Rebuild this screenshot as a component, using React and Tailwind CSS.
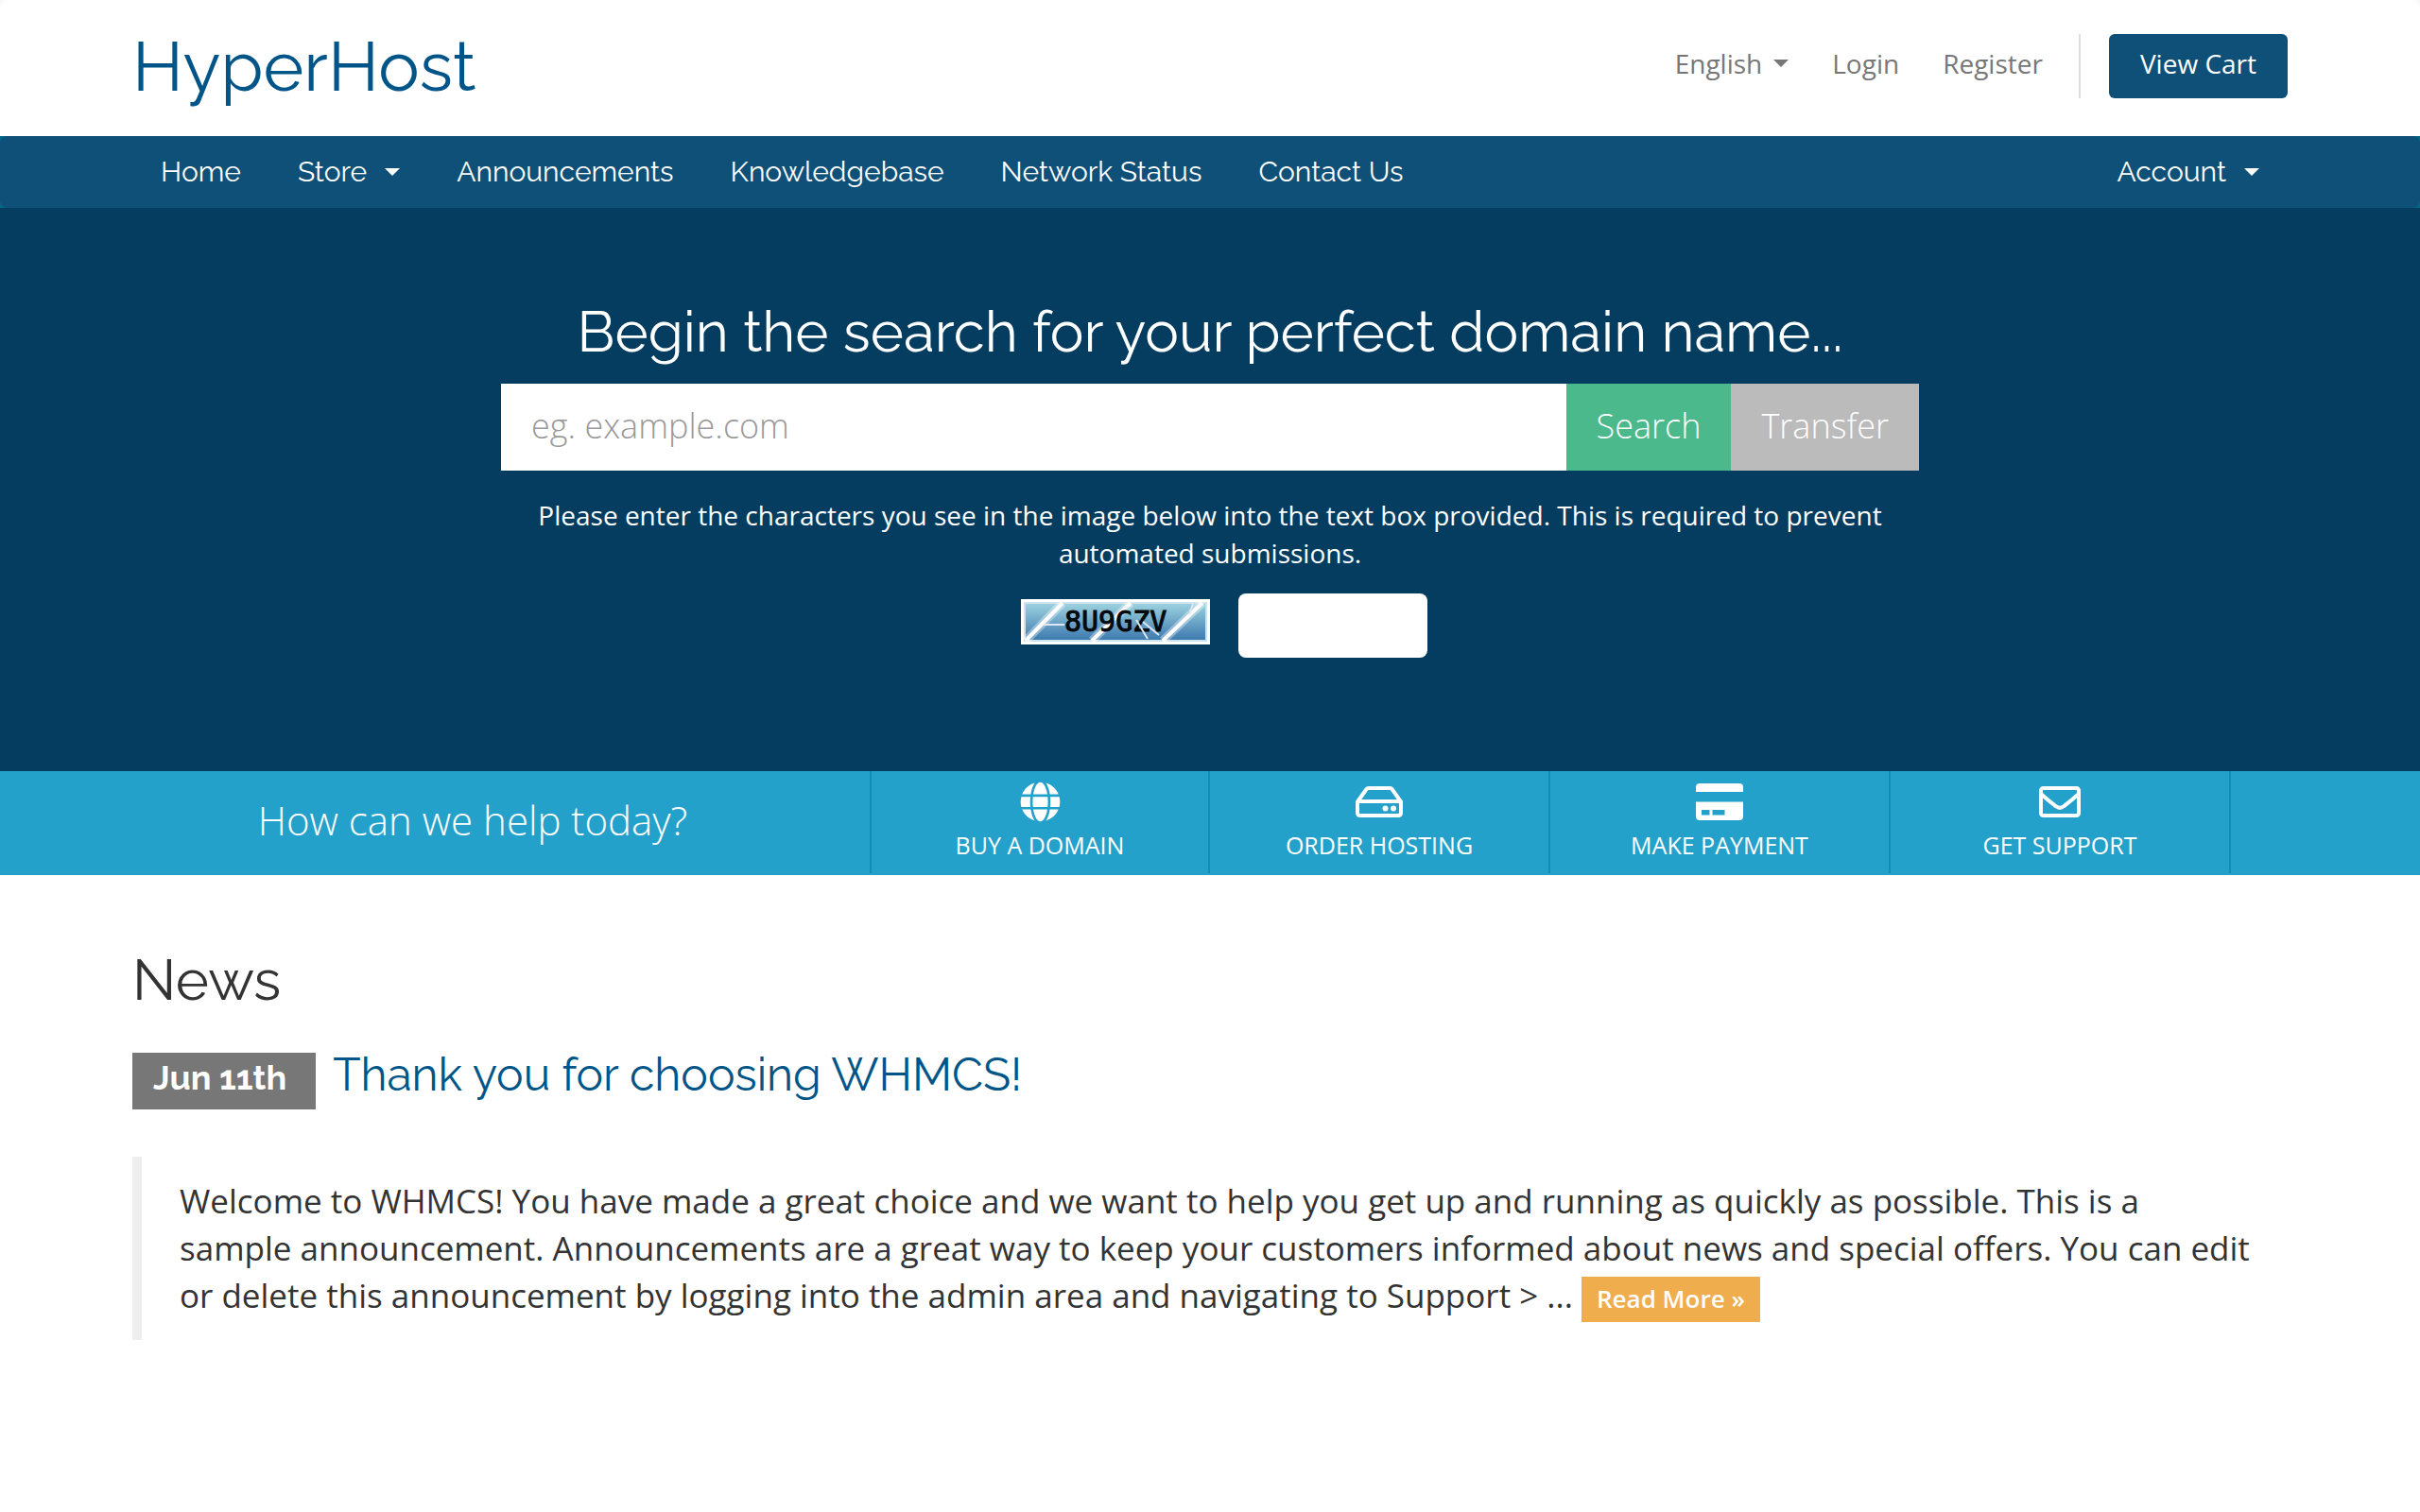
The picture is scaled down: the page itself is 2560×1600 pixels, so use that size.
import { useState } from "react";
import { FaGlobe } from "react-icons/fa";

const menu = [
  { label: "Home" },
  { label: "Store", dropdown: true },
  { label: "Announcements" },
  { label: "Knowledgebase" },
  { label: "Network Status" },
  { label: "Contact Us" },
];

const Caret = ({ className = "" }) => (
  <span className={"inline-block border-x-8 border-t-8 border-x-transparent border-t-current " + className} />
);

const HddIcon = () => (
  <svg viewBox="0 0 50 33" className="h-[33px] w-[50px]" fill="none" stroke="currentColor" strokeWidth="4">
    <path d="M2 28V16.500L11.500 3Q12.300 2 13.500 2H36.500Q37.700 2 38.500 3L48 16.500V28Q48 31 45 31H5Q2 31 2 28Z" />
    <path d="M3 16H47" />
    <circle cx="31.500" cy="23.500" r="3" fill="currentColor" stroke="none" />
    <circle cx="40" cy="23.500" r="3" fill="currentColor" stroke="none" />
  </svg>
);

const EnvelopeIcon = () => (
  <svg viewBox="0 0 44 33" className="h-[33px] w-[44px]" fill="none" stroke="currentColor" strokeWidth="4">
    <rect x="2" y="2" width="40" height="29" rx="2.500" />
    <path d="M2.500 8.500C8 13.500 13 17.500 18 21.300Q22 24.500 26 21.300C31 17.500 36 13.500 41.500 8.500" />
  </svg>
);

const CardIcon = () => (
  <svg viewBox="0 0 50 39" className="h-[39px] w-[50px]" fill="currentColor">
    <path d="M0 9V4Q0 0 4 0H46Q50 0 50 4V9Z" />
    <path fillRule="evenodd" d="M0 19.500H50V35Q50 39 46 39H4Q0 39 0 35ZM6 28V33.500H14.500V28ZM17.500 28V33.500H30.500V28Z" />
  </svg>
);

const shortcuts = [
  { label: "Buy A Domain", icon: <FaGlobe className="size-[43px]" /> },
  { label: "Order Hosting", icon: <HddIcon /> },
  { label: "Make Payment", icon: <CardIcon /> },
  { label: "Get Support", icon: <EnvelopeIcon /> },
];

const CaptchaImage = () => (
  <svg viewBox="0 0 200 48" className="h-12 w-[200px]" role="img" aria-label="Security code">
    <defs>
      <linearGradient id="captcha-bg" x1="0" y1="0" x2="0" y2="1">
        <stop offset="0" stopColor="#9fd3e0" />
        <stop offset="1" stopColor="#3b78ae" />
      </linearGradient>
    </defs>
    <rect width="200" height="48" fill="#fff" />
    <rect x="4" y="4" width="192" height="40" fill="url(#captcha-bg)" stroke="#cfe3ee" strokeWidth="2" />
    <path d="M5 44L44 4M75 44L116 4M150 44L192 4" stroke="#fff" strokeWidth="9" strokeOpacity="0.35" />
    <path d="M5 44L44 4M75 44L116 4M150 44L192 4" stroke="#fff" strokeWidth="4" />
    <text x="46" y="34" fontSize="30" fontFamily="'DejaVu Sans Mono', monospace" fill="#05090c" stroke="#05090c" strokeWidth="1">8U9GZV</text>
    <path d="M24 27H46M122 22L134 42M129 24L146 38M178 16L182 5" stroke="#dde6f2" strokeWidth="2" />
  </svg>
);

export default function App() {
  const [domain, setDomain] = useState("");
  const [code, setCode] = useState("");

  return (
    <div className="min-h-screen bg-white font-['Open_Sans',sans-serif] text-[28px] leading-10 text-[#333]">
      <header className="bg-[#f8f8f8]">
        <div className="flex h-36 items-start justify-between rounded-t-lg bg-white px-[140px] pt-9">
          <a href="#" className="font-['Raleway','Lato',sans-serif] text-[73px] leading-[68px] text-[#058]">HyperHost</a>
          <div className="flex items-start text-[#777]">
            <button className="mr-[46px] flex items-center pt-[11px]">
              English <Caret className="ml-3" />
            </button>
            <a href="#" className="mr-[46px] pt-[11px]">Login</a>
            <a href="#" className="mr-[38px] pt-[11px]">Register</a>
            <a href="#" className="border-l-2 border-[#ddd] pl-[30px]">
              <span className="block h-[68px] rounded-md bg-[#0f5078] px-[33px] pt-[11px] text-white">View Cart</span>
            </a>
          </div>
        </div>
      </header>

      <div className="bg-[#006687]">
        <nav className="flex h-[76px] items-center justify-between rounded-lg bg-[#0f5078] px-[140px] font-['Raleway','Lato',sans-serif] text-[30px] text-white">
          <div className="flex">
            {menu.map((item) => (
              <a key={item.label} href="#" className="flex items-center px-[30px]">
                {item.label}
                {item.dropdown && <Caret className="ml-[19px]" />}
              </a>
            ))}
          </div>
          <a href="#" className="flex items-center px-[30px]">
            Account <Caret className="ml-[19px]" />
          </a>
        </nav>
      </div>

      <section className="h-[596px] bg-[#043d60] pt-[98px] text-center text-white">
        <div className="mx-auto max-w-[1500px]">
          <h2 className="font-['Raleway','Lato',sans-serif] text-[60px] leading-[66px]">Begin the search for your perfect domain name...</h2>
          <form onSubmit={(e) => e.preventDefault()}>
            <div className="mt-[22px] flex h-[92px] text-[36px] font-light">
              <input
                type="text"
                aria-label="Domain name"
                placeholder="eg. example.com"
                value={domain}
                onChange={(e) => setDomain(e.target.value)}
                className="min-w-0 flex-1 bg-white px-8 pb-0.5 text-[#555] placeholder:text-[#999]"
              />
              <button className="bg-[#4bb98c] px-8 pb-0.5">Search</button>
              <button className="bg-[#bbb] px-8 pb-0.5">Transfer</button>
            </div>
            <p className="mt-[27px] px-8">
              Please enter the characters you see in the image below into the text box provided. This is required to prevent automated submissions.
            </p>
            <div className="mt-[23px] flex items-start justify-center gap-[30px] pl-[30px]">
              <div className="pt-1.5">
                <CaptchaImage />
              </div>
              <input
                type="text"
                aria-label="Characters in the image"
                value={code}
                onChange={(e) => setCode(e.target.value)}
                className="h-[68px] w-[200px] rounded-lg bg-white px-6 text-[#555]"
              />
            </div>
          </form>
        </div>
      </section>

      <section className="grid h-[110px] grid-cols-[7fr_3fr_3fr_3fr_3fr] bg-[#24a1ca] pr-[200px] pb-0.5 pl-20 text-white">
        <h3 className="pt-[23px] text-center text-[42px] leading-[58px] font-light">How can we help today?</h3>
        {shortcuts.map((item) => (
          <a key={item.label} href="#" className="flex flex-col items-center border-r-2 border-[#128bb5] pt-2 text-[25px] leading-9 uppercase first-of-type:border-l-2">
            <span className="flex h-12 items-center">{item.icon}</span>
            <span className="mt-1">{item.label}</span>
          </a>
        ))}
      </section>

      <main className="px-[140px] pt-[78px]">
        <h2 className="font-['Raleway','Lato',sans-serif] text-[60px] leading-[66px]">News</h2>
        <article>
          <div className="mt-11 flex items-start gap-[18px] font-['Raleway','Lato',sans-serif]">
            <span className="h-[60px] bg-[#777] pt-1.5 pr-[31px] pl-[22px] text-[36px] leading-10 font-bold text-white">Jun 11th</span>
            <a href="#" className="text-[48px] leading-[46px] text-[#058]">Thank you for choosing WHMCS!</a>
          </div>
          <blockquote className="mt-[50px] border-l-[10px] border-[#eee] px-10 pt-[22px] pb-[19px] text-[35px] leading-[50px]">
            <p>
              Welcome to WHMCS! You have made a great choice and we want to help you get up and running as quickly as possible. This is a sample announcement. Announcements are a great way to keep your customers informed about news and special offers. You can edit or delete this announcement by logging into the admin area and navigating to Support &gt; ...{" "}
              <a href="#" className="inline-block h-12 bg-[#f0ad4e] px-4 align-middle text-[26px] leading-[46px] font-semibold text-white">Read More »</a>
            </p>
          </blockquote>
        </article>
      </main>
    </div>
  );
}
